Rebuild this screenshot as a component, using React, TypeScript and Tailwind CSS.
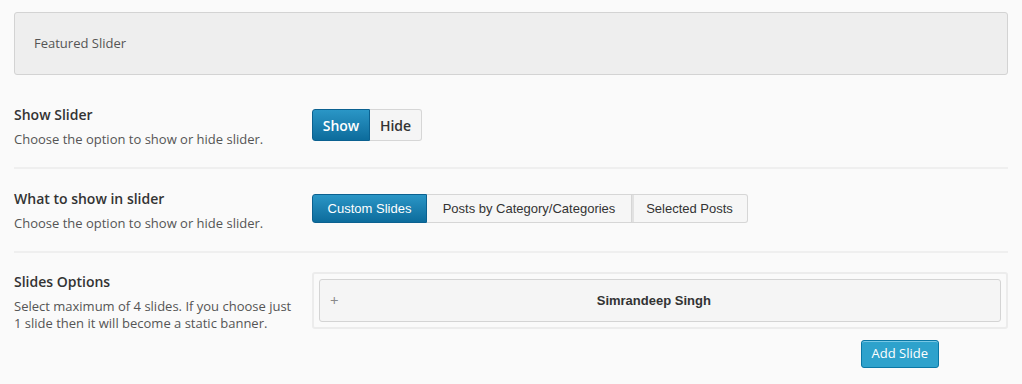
import { useState } from 'react';

const sans = "font-['Open_Sans',sans-serif]";
const helv = "font-['Liberation_Sans',Arial,sans-serif]";

function Label({ title, children }: { title: string; children: React.ReactNode }) {
  return (
    <div className="w-[298px] shrink-0">
      <h3 className="text-[14px] leading-[20px] font-semibold text-[#333]">{title}</h3>
      <p className="mt-[6px] text-[13px] leading-[17px] text-[#555]">{children}</p>
    </div>
  );
}

export default function App() {
  const [show, setShow] = useState(true);
  const [source, setSource] = useState('custom');

  const sources = [
    { id: 'custom', label: 'Custom Slides', w: 'w-[115px]' },
    { id: 'category', label: 'Posts by Category/Categories', w: 'w-[205px]' },
    { id: 'selected', label: 'Selected Posts', w: 'w-[116px]' },
  ];

  return (
    <div className={`min-h-[384px] bg-[#fafafa] px-[14px] pt-[12px] ${sans}`}>
      {/* ヘッダー */}
      <div className="h-[63px] rounded-[3px] border border-[#d3d3d3] bg-[#eeeeee] pl-[19px] flex items-center">
        <span className="text-[13px] text-[#555]">Featured Slider</span>
      </div>

      {/* スライダー表示 */}
      <div className="mt-[30px] flex pb-[19px]">
        <Label title="Show Slider">Choose the option to show or hide slider.</Label>
        <div className="mt-[4px] flex h-[32px] text-[14px] font-semibold">
          <button
            onClick={() => setShow(true)}
            className={`w-[58px] rounded-l-[3px] border ${
              show
                ? 'border-[#0b6190] bg-gradient-to-b from-[#2a96c6] to-[#0c6c9c] text-white'
                : 'border-[#cccccc] bg-[#f5f5f5] text-[#333]'
            }`}
          >
            Show
          </button>
          <button
            onClick={() => setShow(false)}
            className={`w-[52px] rounded-r-[3px] border border-l-0 ${
              !show
                ? 'border-[#0b6190] bg-gradient-to-b from-[#2a96c6] to-[#0c6c9c] text-white'
                : 'border-[#d6d6d6] bg-[#f5f5f5] text-[#333]'
            }`}
          >
            Hide
          </button>
        </div>
      </div>
      <div className="h-[2px] bg-[#efefef]" />

      {/* スライダー内容 */}
      <div className="pt-[20px] flex pb-[19px]">
        <Label title="What to show in slider">Choose the option to show or hide slider.</Label>
        <div className={`mt-[5px] flex h-[29px] text-[13px] ${helv}`}>
          {sources.map((s, i) => (
            <button
              key={s.id}
              onClick={() => setSource(s.id)}
              className={`${s.w} border ${i > 0 ? 'border-l-0' : ''} ${i === 0 ? 'rounded-l-[3px]' : ''} ${
                i === sources.length - 1 ? 'rounded-r-[3px]' : ''
              } ${i === 2 ? 'shadow-[inset_2px_0_0_#e2e2e2]' : ''} ${
                source === s.id
                  ? 'border-[#0b6190] bg-gradient-to-b from-[#2a96c6] to-[#0c6c9c] text-white'
                  : 'border-[#d6d6d6] bg-[#f6f6f6] text-[#333]'
              }`}
            >
              {s.label}
            </button>
          ))}
        </div>
      </div>
      <div className="h-[2px] bg-[#efefef]" />

      {/* スライド設定 */}
      <div className="pt-[19px] flex">
        <Label title="Slides Options">
          Select maximum of 4 slides. If you choose just
          <br />1 slide then it will become a static banner.
        </Label>
        <div className="flex-1">
          <div className="rounded-[3px] border-2 border-[#ececec] bg-[#fafafa] p-[5px]">
            <div className="h-[43px] rounded-[3px] border border-[#d4d4d4] bg-[#f5f5f5] flex items-center pl-[10px] pr-[13px]">
              <span className="text-[15px] leading-none text-[#8a8a8a]">+</span>
              <span className={`flex-1 text-center pr-[18px] text-[13px] font-bold text-[#333] ${helv}`}>
                Simrandeep Singh
              </span>
            </div>
          </div>
          <div className="mt-[11px] flex justify-end pr-[69px]">
            <button className="h-[28px] rounded-[3px] border border-[#0a77a5] bg-[#2ea2cc] px-[10px] text-[13px] text-white shadow-[inset_0_1px_0_#78c8e6]">
              Add Slide
            </button>
          </div>
        </div>
      </div>
    </div>
  );
}
